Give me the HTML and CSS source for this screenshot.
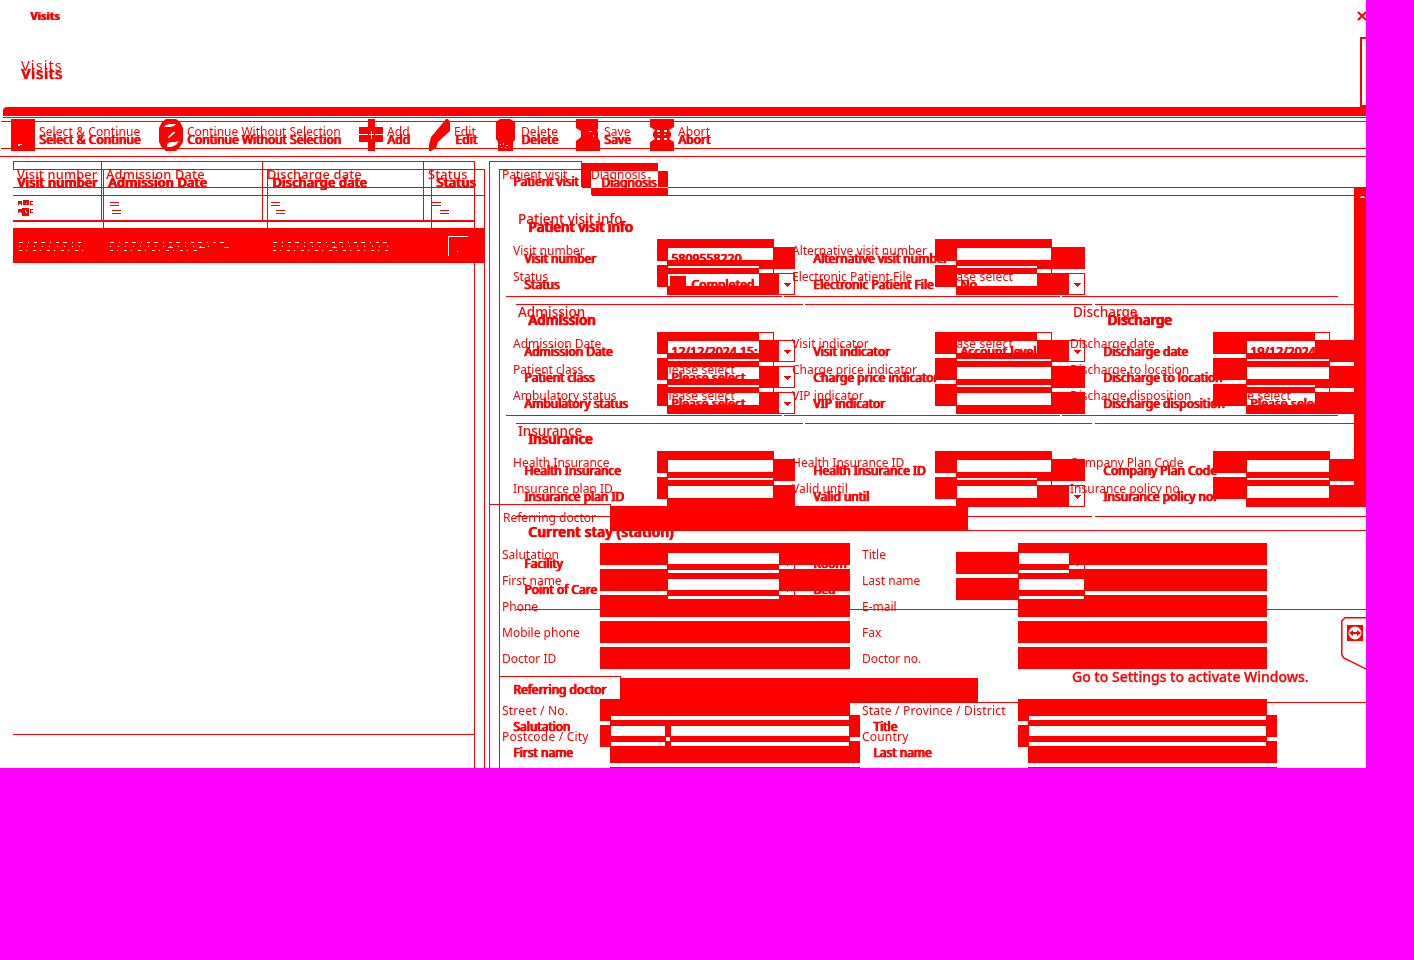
FILE: index.html
```html
<!DOCTYPE html>
<html lang="en">
<head>
<meta charset="utf-8">
<title>Visits</title>
<link rel="stylesheet" href="styles.css">
</head>
<body>
<div class="app">
<div class="layer a">
  <div class="titlebar"><span class="t small">Visits</span><svg class="close" width="10" height="10" viewBox="0 0 10 10"><path d="M1 1l8 8M9 1l-8 8"/></svg></div>
  <div class="head"><span class="t page">Visits</span><i class="edge"></i></div>
  <div class="band"></div>
  <div class="tools">
    <div><svg width="24" height="32"><path d="M0 0h24v32H0z"/><path class="w" d="M7 25h4v1H9v1H7z"/></svg><span class="t">Select &amp; Continue</span></div>
    <div><svg width="24" height="32"><path d="M7 0h10l4 3 3 6v14l-4 6-3 3H7l-4-3-3-6V9l3-6z"/><path class="w" d="M5 8l2-2 4-1h6l-2 2-4 1H7zM14 13h2v1l-6 5H9v-1zM8 25l3-2h5l4-1-3 4-5 2H8z"/></svg><span class="t">Continue Without Selection</span></div>
    <div><svg width="24" height="32"><path d="M9 0h7v32H9zM0 8h24v7H0zM0 16h24v7H0z"/><path class="w" d="M12 12h1v3h2v1h-2v4h-1v-4h-2v-1h2z"/></svg><span class="t">Add</span></div>
    <div><svg width="21" height="32"><path d="M17 0h2l2 3v9L9 23l-2 6-5 3H0v-6l2-8L13 5z"/></svg><span class="t">Edit</span></div>
    <div><svg width="19" height="32"><path d="M4 0h10l5 3v18l-2 2v9H2v-9l-2-3V3z"/><path class="w" d="M4 25h1v1H4zM7 24h1v2H7zM10 26h2v1h-2zM5 28h1v1H5zM9 28h1v1H9z"/></svg><span class="t">Delete</span></div>
    <div><svg width="24" height="32"><path d="M0 0h22v10l-1 1 1 2v6l2 3v10H0V22l5-4v-6L0 9z"/><path class="w" d="M13 12h3v1h-3zM17 16h1v2h-1z"/></svg><span class="t">Save</span></div>
    <div><svg width="24" height="32"><path d="M0 0h24v8l-5 3 2 3v3l-2 3 5 3v9H0v-9l5-3-2-3v-3l2-3-5-3z"/><path class="w" d="M7 11h3v2H7zM14 11h3v2h-3zM7 19h3v2H7zM14 19h3v2h-3zM8 15h2v1H8zM14 15h2v1h-2z"/></svg><span class="t">Abort</span></div>
  </div>
  <div class="main">
    <div class="table">
      <div class="tr th"><span class="t">Visit number</span><span class="t">Admission Date</span><span class="t">Discharge date</span><span class="t">Status</span></div>
      <div class="tr filter"><span class="abc"><svg width="16" height="17"><path d="M0 1h4v4H3V4H1v1H0zM5 0h6v5H5zM12 1h3v1h-2v2h2v1h-3zM0 9h4v4H3v-1H1v1H0zM4 8h7v8H4zM12 9h3v1h-2v2h2v1h-3z"/><path class="w" d="M8 3h1v1H8zM7 10h1v2H7zM8 12h1v1H8z"/></svg></span><span><i class="eq"></i></span><span><i class="eq"></i></span><span><i class="eq"></i></span></div>
    </div>
    <div class="panel">
      <div class="tabs"><span class="tab on t">Patient visit</span><span class="tab off"><b class="t">Diagnosis</b></span></div>
      <section><h3><span class="t">Patient visit info</span></h3>
        <div class="rows">
          <label class="t">Visit number</label><i class="f"></i><label class="t">Alternative visit number</label><i class="f"></i><s></s><s></s>
          <label class="t">Status</label><i class="f d"></i><label class="t">Electronic Patient File</label><i class="f d"><b class="t">Please select</b></i><s></s><s></s>
        </div></section>
      <section><h3><span class="t">Admission</span><span class="t">Discharge</span></h3>
        <div class="rows">
          <label class="t">Admission Date</label><i class="f d"></i><label class="t">Visit indicator</label><i class="f d"><b class="t">Please select</b></i><label class="t">Discharge date</label><i class="f d"></i>
          <label class="t">Patient class</label><i class="f d"><b class="t">Please select</b></i><label class="t">Charge price indicator</label><i class="f"></i><label class="t">Discharge to location</label><i class="f"></i>
          <label class="t">Ambulatory status</label><i class="f d"><b class="t">Please select</b></i><label class="t">VIP indicator</label><i class="f"></i><label class="t">Discharge disposition</label><i class="f d"><b class="t">Please select</b></i>
        </div></section>
      <section><h3><span class="t">Insurance</span></h3>
        <div class="rows">
          <label class="t">Health Insurance</label><i class="f"></i><label class="t">Health Insurance ID</label><i class="f"></i><label class="t">Company Plan Code</label><i class="f"></i>
          <label class="t">Insurance plan ID</label><i class="f"></i><label class="t">Valid until</label><i class="f d"></i><label class="t">Insurance policy no.</label><i class="f"></i>
        </div></section>
      <div class="doctor">
        <div class="bar"><span class="t">Referring doctor</span><i></i></div>
        <div class="drows">
          <label class="t">Salutation</label><i class="f"></i><label class="t">Title</label><i class="f"></i>
          <label class="t">First name</label><i class="f"></i><label class="t">Last name</label><i class="f"></i>
          <label class="t">Phone</label><i class="f"></i><label class="t">E-mail</label><i class="f"></i>
          <label class="t">Mobile phone</label><i class="f"></i><label class="t">Fax</label><i class="f"></i>
          <label class="t">Doctor ID</label><i class="f"></i><label class="t">Doctor no.</label><i class="f"></i>
        </div>
        <div class="drows address">
          <label class="t">Street / No.</label><i class="f"></i><label class="t">State / Province / District</label><i class="f"></i>
          <label class="t">Postcode / City</label><span class="pair"><i class="f"></i><i class="f"></i></span><label class="t">Country</label><i class="f"></i>
        </div>
      </div>
    </div>
  </div>
</div>
<div class="layer b">
  <div class="head"><span class="t page">Visits</span></div>
  <div class="tools">
    <div><span class="t">Select &amp; Continue</span></div><div><span class="t">Continue Without Selection</span></div><div><span class="t">Add</span></div><div><span class="t">Edit</span></div><div><span class="t">Delete</span></div><div><span class="t">Save</span></div><div><span class="t">Abort</span></div>
  </div>
  <div class="main">
    <div class="table">
      <div class="tr th"><span class="t">Visit number</span><span class="t">Admission Date</span><span class="t">Discharge date</span><span class="t">Status</span></div>
      <div class="tr filter"><span></span><span><i class="eq"></i></span><span><i class="eq"></i></span><span><i class="eq"></i></span></div>
      <div class="selected"><svg width="471" height="34"><path class="bits" stroke-dasharray="4 5 1 5 3 4" d="M6 14.5h66M97 14.5h118M260 14.5h118"/><path class="bits" stroke-dasharray="1 7 1 6" d="M6 18.5h66M97 18.5h100M261 18.5h118"/><path class="bits" stroke-dasharray="3 4 1 6" d="M6 22.5h66M97 22.5h90M260 22.5h118"/><path class="bits" d="M155 19.5h5M186 19.5h6M211 19.5h5M319 19.5h5M435.5 28V8.5H455M444 23.5h1"/></svg></div>
    </div>
    <div class="panel">
      <div class="tabs"><span class="tab on t">Patient visit</span><span class="tab off"><b class="t">Diagnosis</b></span></div>
      <section><h3><span class="t">Patient visit info</span></h3>
        <div class="rows">
          <label class="t">Visit number</label><i class="f"><b class="t">5809558220</b></i><label class="t">Alternative visit number</label><i class="f"></i><s></s><s></s>
          <label class="t">Status</label><i class="f d done"><b class="t">Completed</b></i><label class="t">Electronic Patient File</label><i class="f d"><b class="t">No</b></i><s></s><s></s>
        </div></section>
      <section><h3><span class="t">Admission</span><span class="t">Discharge</span></h3>
        <div class="rows">
          <label class="t">Admission Date</label><i class="f d"><b class="t">12/12/2024 15:</b></i><label class="t">Visit indicator</label><i class="f d"><b class="t">Account level</b></i><label class="t">Discharge date</label><i class="f"><b class="t">19/12/2024</b></i>
          <label class="t">Patient class</label><i class="f d"><b class="t">Please select</b></i><label class="t">Charge price indicator</label><i class="f"></i><label class="t">Discharge to location</label><i class="f"></i>
          <label class="t">Ambulatory status</label><i class="f d"><b class="t">Please select</b></i><label class="t">VIP indicator</label><i class="f"></i><label class="t">Discharge disposition</label><i class="f"><b class="t">Please select</b></i>
        </div></section>
      <section><h3><span class="t">Insurance</span></h3>
        <div class="rows">
          <label class="t">Health Insurance</label><i class="f"></i><label class="t">Health Insurance ID</label><i class="f"></i><label class="t">Company Plan Code</label><i class="f"></i>
          <label class="t">Insurance plan ID</label><i class="f"></i><label class="t">Valid until</label><i class="f d"></i><label class="t">Insurance policy no.</label><i class="f"></i>
        </div></section>
      <section class="wide"><h3><span class="t">Current stay (station)</span></h3>
        <div class="rows">
          <label class="t">Facility</label><i class="f d"></i><label class="t">Room</label><i class="f d"></i><s></s><s></s>
          <label class="t">Point of Care</label><i class="f d"></i><label class="t">Bed</label><i class="f"></i><s></s><s></s>
        </div></section>
      <div class="doctor">
        <div class="bar"><span class="t">Referring doctor</span><i></i></div>
        <div class="drows">
          <label class="t">Salutation</label><i class="f"></i><label class="t">Title</label><i class="f"></i>
          <label class="t">First name</label><i class="f"></i><label class="t">Last name</label><i class="f"></i>
          <label></label><i class="f"></i><label></label><i class="f"></i>
        </div>
      </div>
    </div>
  </div>
</div>
<div class="scroll"><svg width="12" height="12"><path class="w" d="M6 10h5v1H6zM7 9h3v1H7z"/></svg></div>
<div class="watermark"><strong>Activate Windows</strong><span>Go to Settings to activate Windows.</span></div>
<svg class="remote" width="26" height="53" viewBox="0 0 26 53"><path class="o" d="M26 .8H4L.8 4v34l2 3L26 52.500"/><path d="M6 8h16v16H6z"/><circle class="w" cx="14" cy="16" r="6.500"/><path d="M8 16l4-3v2h4v-2l4 3-4 3v-2h-4v2z"/></svg>
</div>
</body>
</html>
```

FILE: styles.css
```css
* { box-sizing: border-box; }
body { margin: 0; background: #f0f; font: 12px/22px "Noto Sans", sans-serif; color: #f00; }
.app { position: relative; width: 1366px; height: 768px; overflow: hidden; background: #fff; isolation: isolate; }
.layer { position: absolute; inset: 0; }
i, b, s { font-style: normal; font-weight: inherit; text-decoration: none; }
svg { display: block; fill: #f00; flex: none; }
.w { fill: #fff; }
.t { position: relative; z-index: 3; white-space: nowrap; }
.b .t { text-shadow: 1px 0 #f00, 1px 0 #f00; -webkit-text-stroke: .35px #f00; }

.titlebar { height: 32px; display: flex; justify-content: space-between; padding: 5px 0 0 30px; }
.titlebar .small { font-size: 11px; font-weight: 700; text-shadow: 1px 0 #f00; }
.close { margin: 6px -1px 0 0; stroke: #f00; stroke-width: 2; }
.head { height: 75px; display: flex; justify-content: space-between; padding: 5px 0 0 21px; }
.page { font-size: 14.500px; line-height: 56px; letter-spacing: 1.1px; }
.edge { width: 6px; height: 70px; border: 2px solid #f00; border-right: 0; }
.band { height: 14px; margin-left: 3px; background: linear-gradient(#f00 0 9px, #fff 9px 10px, #f00 10px 11px, #fff 11px); border-top-left-radius: 4px; }
.tools { display: grid; grid-template-columns: 148px 200px 70px 67px 80px 74px 90px; padding: 0 0 0 11px; }
.tools .t { letter-spacing: .1px; }
.tools > div:nth-child(2) .t { letter-spacing: 0; }
.tools > div { display: flex; gap: 4px; align-items: center; }
.a .tools { height: 28px; background: linear-gradient(#f00, #f00) 1px 0 / 100% 1px no-repeat, linear-gradient(#f00, #f00) 1px 27px / 100% 1px no-repeat; }
.a .tools > div { height: 28px; }
.a .tools .t { margin-top: -6px; }
.a .tools > div:nth-child(5) { gap: 6px; }
.b .tools .t { margin-left: 28px; }
.b .tools > div:nth-child(4) .t { margin-left: 26px; }
.b .tools > div:nth-child(5) .t { margin-left: 25px; }
.a .main { margin-top: 12px; }
.b .head { height: 129px; padding-top: 45px; }
.b .tools { height: 27px; line-height: 22px; }
.b .tools > div { height: 22px; }
.b .main { border-top: 1px solid #f00; padding-top: 12px; }

.main { display: flex; padding-left: 13px; height: 607px; }
.table { width: 462px; border-right: 1px solid #f00; height: 610px; flex: none; }
.b .table { width: 472px; }
.a .table { background: linear-gradient(#f00, #f00) 0 573px / 100% 1px no-repeat, linear-gradient(#f00, #f00) 0 0 / 1px 8px no-repeat; }
.tr { display: grid; grid-template-columns: 89px 161px 161px 1fr; height: 33px; }
.b .tr { grid-template-columns: 91px 164px 164px 1fr; }
.tr > span { border-right: 1px solid #f00; padding-left: 4px; }
.tr > span:last-child { border-right: 0; }
.th { border: solid #f00; border-width: 1px 0; height: 27px; font-size: 12.800px; font-weight: 500; line-height: 25px; letter-spacing: .2px; }
.filter > span { padding: 14px 0 0 8px; }
.filter > .abc { padding: 12px 0 0 5px; }
.a .filter { border-bottom: 2px solid #f00; height: 34px; }
.eq { display: block; width: 9px; height: 4px; border: solid #f00; border-width: 1px 0; }
.selected { background: #f00; height: 35px; margin-top: -1px; }
.bits { stroke: #fff; stroke-width: 1; fill: none; }

.panel { flex: none; width: 877px; margin-left: 14px; border-left: 1px solid #f00; height: 610px; }
.tabs { display: flex; height: 27px; background: linear-gradient(#f00, #f00) 92px 26px / 100% 1px no-repeat; }
.tab { display: block; }
.on { width: 92px; border-top: 1px solid #f00; padding-left: 12px; line-height: 25px; }
.a .on { border-right: 1px solid #f00; height: 9px; }
.b .on { line-height: 24px; padding-left: 13px; }
.off { position: relative; width: 77px; height: 24px; margin: 2px 0 0 -1px; padding-left: 10px; line-height: 23px; }
.off::before, .f::before { content: ""; position: absolute; inset: 0; background: #0ff; mix-blend-mode: difference; z-index: 1; }
section { padding-left: 7px; margin-left: 16px; }
section::after { content: ""; display: block; position: relative; z-index: 2; width: 832px; height: 1px; margin: 5px 0 0 -7px; background: repeating-linear-gradient(90deg, #f00 0 276px, transparent 276px 278px); }
.b section::after { width: 838px; background: repeating-linear-gradient(90deg, #f00 0 287px, transparent 287px 289.500px); }
.b section:nth-of-type(3)::after, .b .wide::after { width: 850px; }
.b .wide::after { background: #f00; }
.a section:nth-of-type(3)::after { visibility: hidden; height: 1px; display: none; }
.tabs + section { margin-top: 16px; }
h3 { display: flex; margin: 0; height: 35px; padding-left: 5px; font-size: 13.500px; line-height: 31px; font-weight: 500; }
h3 span:first-child { width: 555px; }
.b h3 span:first-child { width: 579px; }
.wide h3 { letter-spacing: .4px; }
.rows { display: grid; grid-template-columns: 144px 117px 161px 117px 161px 117px; grid-auto-rows: 26px; }
.b .rows { grid-template-columns: 144px 128px 161px 129px 161px 108px; }
.rows label { line-height: 23px; }
.rows .f + label { padding-left: 18px; }
.rows > label:nth-child(6n+1) { padding-left: 0; }
.b .rows > label:nth-child(6n+1) { padding-left: 1px; }
.f { display: block; position: relative; height: 22px; padding-left: 4px; line-height: 23px; }
.f .t { letter-spacing: .15px; }
.a .rows .f { padding-left: 4px; }
.f::after { content: ""; position: absolute; inset: 0; border: 1px solid #f00; z-index: 2; }
.d::before { right: 15px; }
.b .d { background: linear-gradient(#f00, #f00) right 15px top 0 / 1px 22px no-repeat; }
.b .d::after { background: conic-gradient(from -45deg at 50% 100%, #f00 90deg, transparent 0) right 3px top 9px / 7px 4px no-repeat; }
.b .done { padding-left: 24px; }
.done .t::before { content: ""; position: absolute; left: -21px; top: 0; width: 16px; height: 16px; background: #f00; }

.a .doctor { margin-top: 1px; }
.b .doctor { margin-top: 66px; }
.bar { display: flex; height: 27px; }
.bar::after { content: ""; flex: 1; border-bottom: 1px solid #f00; position: relative; z-index: 2; }
.bar span { width: 121px; border: solid #f00; border-width: 1px 1px 0 0; padding-left: 13px; line-height: 26px; }
.bar i { position: relative; z-index: 2; width: 357px; margin-top: 2px; background: #f00; }
.drows { display: grid; grid-template-columns: 110px 250px 168px 249px; grid-auto-rows: 26px; padding: 12px 0 0 0; line-height: 24px; }
.drows label { padding-left: 12px; }
.b .drows label { padding-left: 13px; }
.address { padding-top: 26px; letter-spacing: .2px; }
.pair { display: grid; grid-template-columns: 66px 180px; gap: 4px; }

.scroll { position: absolute; z-index: 4; left: 1354px; top: 187px; width: 12px; height: 320px; background: #f00; }
.watermark { position: absolute; z-index: 4; left: 1072px; top: 640px; }
.watermark strong { display: block; font-size: 18px; font-weight: 400; line-height: 31px; height: 25px; }
.watermark span { display: block; font-size: 14px; font-weight: 500; line-height: 24px; white-space: nowrap; -webkit-text-stroke: .3px #f00; }
.remote { position: absolute; z-index: 4; left: 1341px; top: 617px; }
.o { fill: none; stroke: #f00; stroke-width: 1.500; }
```
